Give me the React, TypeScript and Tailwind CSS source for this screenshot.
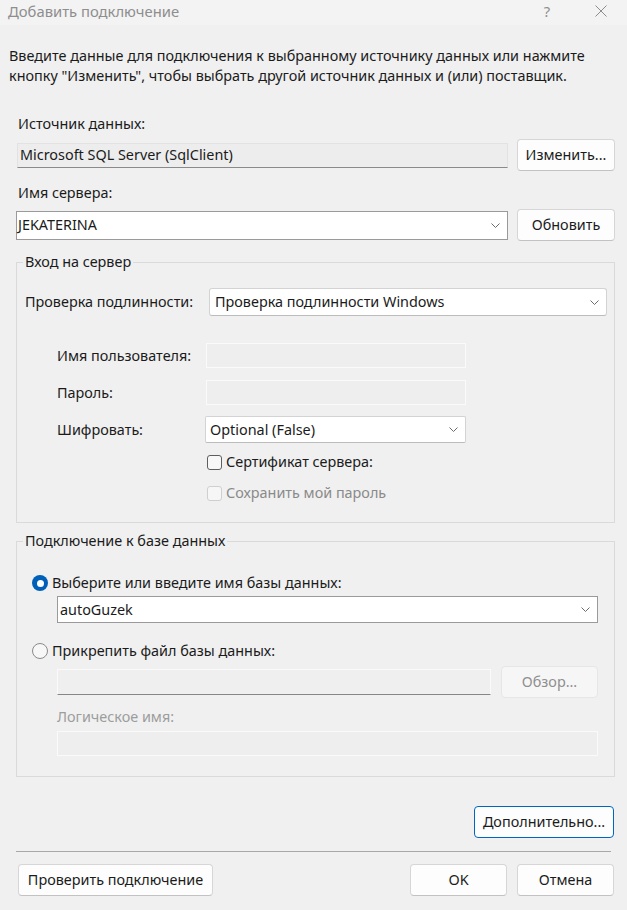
import React from 'react';

const Chevron: React.FC = () => (
  <svg width="9" height="5" viewBox="0 0 9 5" className="shrink-0">
    <path d="M0.5 0.5 L4.5 4.5 L8.5 0.5" fill="none" stroke="#6b6b6b" strokeWidth="1" />
  </svg>
);

const Button: React.FC<{ label: string; className?: string; disabled?: boolean }> = ({ label, className = '', disabled }) => (
  <div
    className={
      'h-[32px] flex items-center justify-center rounded-[4px] border ' +
      (disabled
        ? 'bg-[#f6f6f6] border-[#e6e6e6] text-[#8f8f8f] '
        : 'bg-[#fdfdfd] border-[#d6d6d6] border-b-[#c2c2c2] text-[#1b1b1b] ') +
      className
    }
  >
    {label}
  </div>
);

const App: React.FC = () => {
  return (
    <div className="w-[627px] h-[910px] bg-[#f0f0f0] font-['Noto_Sans',sans-serif] text-[14.4px] leading-[20px] text-[#1b1b1b] flex flex-col overflow-hidden">
      {/* Title bar */}
      <div className="h-[25px] bg-[#f3f3f3] flex items-center pl-[8px] pb-[3px] text-[#8e8e8e] text-[14.8px]">
        <span className="flex-1">Добавить подключение</span>
        <span className="w-[20px] text-center mr-[38px]">?</span>
        <svg width="12" height="12" viewBox="0 0 12 12" className="mr-[20px]">
          <path d="M0.5 0.5 L11.5 11.5 M11.5 0.5 L0.5 11.5" stroke="#8c8c8c" strokeWidth="1" />
        </svg>
      </div>

      {/* Intro */}
      <p className="mt-[21px] pl-[9px] pr-[4px]">
        Введите данные для подключения к выбранному источнику данных или нажмите
        <br />
        кнопку "Изменить", чтобы выбрать другой источник данных и (или) поставщик.
      </p>

      <div className="mt-[28px] pl-[18px]">Источник данных:</div>
      <div className="mt-[5px] flex items-center gap-[9px] pl-[17px]">
        <div className="w-[491px] h-[25px] bg-[#ededed] border border-[#e2e2e2] border-b-[#8a8a8a] flex items-center pl-[2px]">
          Microsoft SQL Server (SqlClient)
        </div>
        <Button label="Изменить..." className="w-[98px]" />
      </div>

      <div className="mt-[12px] pl-[18px]">Имя сервера:</div>
      <div className="mt-[6px] flex items-center gap-[9px] pl-[16px]">
        <div className="w-[492px] h-[29px] bg-white border border-[#9a9a9a] flex items-center pl-[1px] pr-[7px]">
          <span className="flex-1">JEKATERINA</span>
          <Chevron />
        </div>
        <Button label="Обновить" className="w-[98px]" />
      </div>

      {/* Вход на сервер */}
      <fieldset className="mt-[11px] ml-[16px] w-[599px] border border-[#dadada] pl-[6px] pr-[7px] pb-[19px]">
        <legend className="px-[2px]">Вход на сервер</legend>
        <div className="pl-[2px]">
          <div className="mt-[16px] flex items-center">
            <span className="w-[184px]">Проверка подлинности:</span>
            <div className="flex-1 h-[28px] bg-white border border-[#d3d3d3] border-b-[#bcbcbc] rounded-[3px] flex items-center pl-[5px] pr-[7px]">
              <span className="flex-1">Проверка подлинности Windows</span>
              <Chevron />
            </div>
          </div>

          <div className="mt-[27px] flex items-center pl-[32px]">
            <span className="w-[149px]">Имя пользователя:</span>
            <div className="w-[260px] h-[25px] bg-[#eeeeee] border border-[#fafafa]" />
          </div>
          <div className="mt-[12px] flex items-center pl-[32px]">
            <span className="w-[149px]">Пароль:</span>
            <div className="w-[260px] h-[25px] bg-[#eeeeee] border border-[#fafafa]" />
          </div>
          <div className="mt-[11px] flex items-center pl-[32px]">
            <span className="w-[148px]">Шифровать:</span>
            <div className="w-[261px] h-[27px] bg-white border border-[#d3d3d3] border-b-[#bcbcbc] rounded-[2px] flex items-center pl-[4px] pr-[7px]">
              <span className="flex-1">Optional (False)</span>
              <Chevron />
            </div>
          </div>

          <div className="mt-[9px] flex items-center gap-[4px] pl-[182px]">
            <div className="w-[15px] h-[15px] rounded-[3px] border border-[#5e5e5e] bg-[#f8f8f8]" />
            <span>Сертификат сервера:</span>
          </div>
          <div className="mt-[11px] flex items-center gap-[4px] pl-[182px] text-[#8a8a8a]">
            <div className="w-[15px] h-[15px] rounded-[3px] border border-[#cfcfcf] bg-[#f6f6f6]" />
            <span>Сохранить мой пароль</span>
          </div>
        </div>
      </fieldset>

      {/* Подключение к базе данных */}
      <fieldset className="mt-[8px] ml-[16px] w-[599px] border border-[#dadada] pl-[6px] pr-[16px] pb-[20px]">
        <legend className="px-[2px]">Подключение к базе данных</legend>
        <div className="mt-[22px] flex items-center gap-[4px] pl-[9px]">
          <div className="w-[16px] h-[16px] rounded-full bg-[#005fb8] flex items-center justify-center">
            <div className="w-[7px] h-[7px] rounded-full bg-white" />
          </div>
          <span>Выберите или введите имя базы данных:</span>
        </div>
        <div className="mt-[3px] ml-[34px] h-[27px] bg-white border border-[#9a9a9a] flex items-center pl-[2px] pr-[7px]">
          <span className="flex-1">autoGuzek</span>
          <Chevron />
        </div>

        <div className="mt-[18px] flex items-center gap-[4px] pl-[9px]">
          <div className="w-[16px] h-[16px] rounded-full border border-[#8a8a8a] bg-[#f7f7f7]" />
          <span>Прикрепить файл базы данных:</span>
        </div>
        <div className="mt-[5px] ml-[34px] flex items-center gap-[10px]">
          <div className="w-[434px] h-[26px] bg-[#efefef] border border-[#fafafa] border-b-[#868686]" />
          <Button label="Обзор..." disabled className="flex-1" />
        </div>
        <div className="mt-[9px] ml-[34px] text-[#9d9d9d]">Логическое имя:</div>
        <div className="mt-[4px] ml-[34px] h-[25px] bg-[#eeeeee] border border-[#fafafa]" />
      </fieldset>

      <div className="mt-[29px] flex justify-end pr-[13px]">
        <div className="w-[140px] h-[32px] flex items-center justify-center rounded-[4px] border border-[#0067c0] bg-[#fdfdfd]">
          Дополнительно...
        </div>
      </div>

      <div className="mt-[13px] mx-[16px] h-px bg-[#a8a8a8]" />

      <div className="mt-[12px] flex items-center pl-[18px] pr-[13px]">
        <Button label="Проверить подключение" className="w-[195px]" />
        <div className="flex-1" />
        <Button label="OK" className="w-[97px]" />
        <Button label="Отмена" className="w-[97px] ml-[10px]" />
      </div>
    </div>
  );
};

export default App;
